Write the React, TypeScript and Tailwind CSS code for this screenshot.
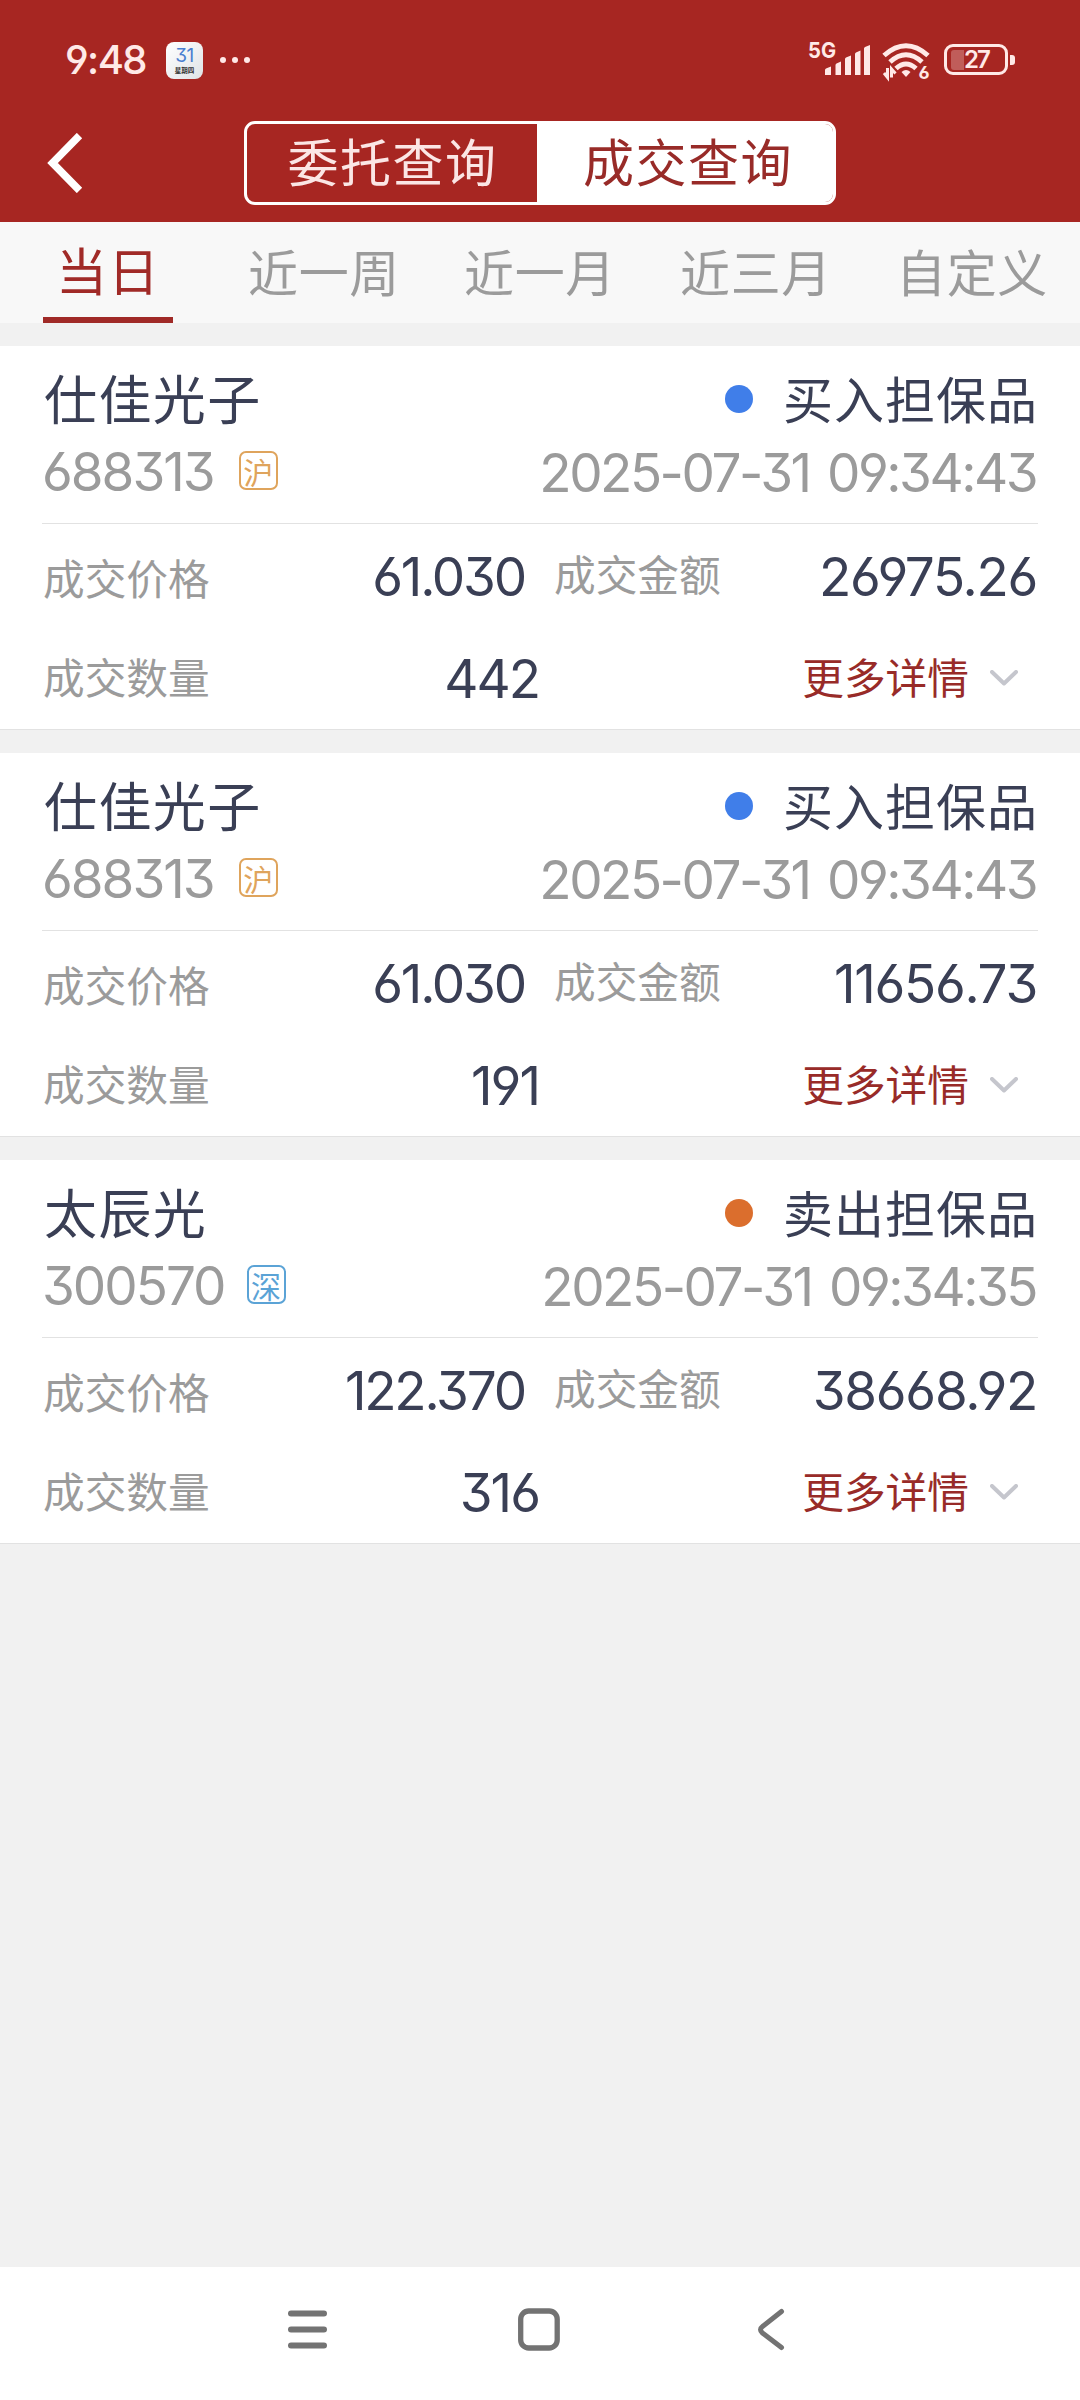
const CJK = "font-['Noto_Sans_CJK_SC',sans-serif]";
// Inter with open 6/9 and flat-top 3
const NUM = "font-['Inter','Noto_Sans_CJK_SC',sans-serif] [font-feature-settings:'cv03','cv04','cv09']";

const TABS = ['当日', '近一周', '近一月', '近三月', '自定义'];

type Deal = {
  name: string;
  code: string;
  market: '沪' | '深';
  side: 'buy' | 'sell';
  time: string;
  price: string;
  amount: string;
  qty: string;
};

const DEALS: Deal[] = [
  {
    name: '仕佳光子',
    code: '688313',
    market: '沪',
    side: 'buy',
    time: '2025-07-31 09:34:43',
    price: '61.030',
    amount: '26975.26',
    qty: '442',
  },
  {
    name: '仕佳光子',
    code: '688313',
    market: '沪',
    side: 'buy',
    time: '2025-07-31 09:34:43',
    price: '61.030',
    amount: '11656.73',
    qty: '191',
  },
  {
    name: '太辰光',
    code: '300570',
    market: '深',
    side: 'sell',
    time: '2025-07-31 09:34:35',
    price: '122.370',
    amount: '38668.92',
    qty: '316',
  },
];

const MARKET_STYLE = {
  沪: 'ml-[25px] border-[#dfa45c] text-[#dfa45c]',
  深: 'ml-[22px] border-[#5ba3d6] text-[#5ba3d6]',
};

function Signal() {
  return (
    <svg viewBox="0 -10 62 50" fill="#ffe9e7" className="-mt-[10px] h-[50px] w-[62px]">
      <text x="0" y="17.500" fontSize="22" fontWeight="700" textLength="28" lengthAdjust="spacingAndGlyphs">
        5G
      </text>
      <path d="M17 35v-5q0-1 1-1.500l5-2V35zM27.500 35V25q0-1 1-1.500l4.500-2V35zM37 35V19q0-1 1-1.500l5-2V35zM47 35V14q0-1 1-1.500l4.500-2V35zM56 35V8.500q0-1 1-1.500l5-2V35z" />
    </svg>
  );
}

function Wifi() {
  return (
    <svg viewBox="0 0 50 50" fill="none" stroke="#ffe9e7" className="h-[50px] w-[50px]">
      <path d="M2 15.500Q24-4 46 15.500" strokeWidth="5" />
      <path d="M8 22Q24 7.500 40 22" strokeWidth="5" />
      <path d="M14 28.500Q24 19.500 34 28.500" strokeWidth="5" />
      <path d="M19.500 32Q24 28 28.500 32L24 37z" fill="#ffe9e7" stroke="none" />
      <path d="M5.500 28v9.500L2 33M9.500 37.500V29l4 4.500" strokeWidth="3" />
      <text x="36.500" y="38.500" fontSize="18" fontWeight="700" fill="#ffe9e7" stroke="none">
        6
      </text>
    </svg>
  );
}

function StatusBar() {
  return (
    <div className={`flex h-[121px] items-start pr-[65px] pl-[65px] ${NUM}`}>
      <span className="mt-[35px] w-[101px] text-[40px] leading-[50px] font-medium tracking-[-1.6px] text-[#ffe9e7]">
        9:48
      </span>
      <div className="mt-[42px] flex h-[37px] w-[37px] flex-col items-center rounded-[8px] bg-gradient-to-br from-white to-[#dfe3e6]">
        <span className="mt-[4px] text-[19px] leading-[20px] tracking-[-0.5px] text-[#4a7fd0]">31</span>
        <span className={`text-[6.5px] leading-[8px] font-bold text-[#333] ${CJK}`}>星期四</span>
      </div>
      <div className="mt-[57px] ml-[17px] flex gap-[6px]">
        <i className="h-[6px] w-[6px] rounded-full bg-[#ffe9e7]" />
        <i className="h-[6px] w-[6px] rounded-full bg-[#ffe9e7]" />
        <i className="h-[6px] w-[6px] rounded-full bg-[#ffe9e7]" />
      </div>
      <div className="mt-[40px] ml-auto flex items-start">
        <Signal />
        <div className="ml-[12px]">
          <Wifi />
        </div>
        <div className="mt-[4px] ml-[12px] flex items-center gap-[2px]">
          <div className="flex h-[31px] w-[64px] items-center rounded-[9px] border-[3px] border-[#ffe9e7] pl-[4px]">
            <i className="h-[20px] w-[13px] rounded-l-[3px] bg-[#c05d5a]" />
            <span className="text-[24px] leading-[25px] font-semibold tracking-[-2px] text-[#ffe9e7]">27</span>
          </div>
          <i className="h-[10px] w-[5px] rounded-r-[3px] bg-[#ffe9e7]" />
        </div>
      </div>
    </div>
  );
}

function DealCard({ deal }: { deal: Deal }) {
  const buy = deal.side === 'buy';
  return (
    <section className="h-[384px] border-b border-[#e2e2e2] bg-white px-[42px]">
      <div className="flex h-[178px] flex-col border-b border-[#e2e2e2] pt-[26px]">
        <div className="flex h-[54px] items-center justify-between text-[#3a3f55]">
          <h2 className="mb-[5px] pl-[2px] text-[53px] leading-[54px] tracking-[1.4px]">{deal.name}</h2>
          <div className="flex items-center">
            <i className={`mr-[30px] h-7 w-7 rounded-full ${buy ? 'bg-[#407ee9]' : 'bg-[#db6e2d]'}`} />
            <span className="mb-[5px] text-[50px] leading-[54px] tracking-[1px]">
              {buy ? '买入担保品' : '卖出担保品'}
            </span>
          </div>
        </div>
        <div className="mt-[19px] flex h-[52px] items-center justify-between text-[#9b9b9b]">
          <div className="flex items-center">
            <span className={`mt-px text-[53px] leading-[52px] tracking-[-2px] ${NUM}`}>{deal.code}</span>
            <span
              className={`mb-px grid h-[39px] w-[39px] place-items-center rounded-[7px] border-2 text-[30px] leading-[34px] ${MARKET_STYLE[deal.market]}`}
            >
              {deal.market}
            </span>
          </div>
          <span
            className={`mt-[3px] pr-[2px] text-[53px] leading-[52px] tracking-[-2.5px] [word-spacing:5px] ${NUM}`}
          >
            {deal.time}
          </span>
        </div>
      </div>

      <div className="flex h-[104px] items-center">
        <span className="mt-px w-[260px] pl-px text-[41.7px] leading-[48px] text-[#9b9b9b]">成交价格</span>
        <span
          className={`mt-px w-[224px] pr-[1px] text-right text-[53px] leading-[52px] tracking-[-2.2px] text-[#3a3f55] ${NUM}`}
        >
          {deal.price}
        </span>
        <span className="mb-[7px] ml-[28px] text-[41.7px] leading-[48px] text-[#9b9b9b]">成交金额</span>
        <span
          className={`mt-px ml-auto pr-[1px] text-[53px] leading-[52px] tracking-[-1.3px] text-[#3a3f55] ${NUM}`}
        >
          {deal.amount}
        </span>
      </div>
      <div className="flex h-[101px] items-center">
        <span className="mb-[5px] w-[260px] pl-px text-[41.7px] leading-[48px] text-[#9b9b9b]">成交数量</span>
        <span
          className={`mt-px w-[238px] pr-[1px] text-right text-[53px] leading-[52px] tracking-[-2px] text-[#3a3f55] ${NUM}`}
        >
          {deal.qty}
        </span>
        <button className="ml-auto flex items-center text-[41.7px] leading-[48px] text-[#982b28]">
          <span className="mb-[5px]">更多详情</span>
          <svg
            viewBox="0 0 28 16"
            fill="none"
            stroke="#c5c6cd"
            strokeWidth="4"
            strokeLinecap="round"
            strokeLinejoin="round"
            className="mr-[20px] mb-[2px] ml-[21px] h-4 w-7"
          >
            <path d="M2 2l12 11.500L26 2" />
          </svg>
        </button>
      </div>
    </section>
  );
}

function NavBar() {
  return (
    <nav className="mt-auto flex h-[133px] items-start bg-white pt-[40px] pl-[285px]">
      <svg viewBox="0 0 46 46" stroke="#737373" strokeWidth="6" strokeLinecap="round" className="h-[46px] w-[46px]">
        <path d="M6 6.500h33M6 22.500h33M6 38.500h33" />
      </svg>
      <svg viewBox="0 0 46 46" fill="none" stroke="#737373" strokeWidth="5.300" className="ml-[185px] h-[46px] w-[46px]">
        <rect x="4.700" y="4" width="36.500" height="37" rx="8" />
      </svg>
      <svg
        viewBox="0 0 46 46"
        fill="none"
        stroke="#737373"
        strokeWidth="5"
        strokeLinecap="round"
        className="ml-[187px] h-[46px] w-[46px]"
      >
        <path d="M32.500 4.500L13.500 19.500q-4 3 0 6.500L32.500 40.500" />
      </svg>
    </nav>
  );
}

export default function App() {
  return (
    <div className={`flex h-[2400px] w-[1080px] flex-col overflow-hidden bg-[#f1f1f1] ${CJK}`}>
      <header className="h-[222px] bg-[#a72622]">
        <StatusBar />
        <div className="flex h-[84px] items-center">
          <svg viewBox="0 0 36 60" fill="none" stroke="white" strokeWidth="7.500" className="ml-[47px] h-[60px] w-9">
            <path d="M32.500 2.500L5.500 30l27 27.500" />
          </svg>
          <div className="ml-[161px] flex h-[84px] w-[592px] overflow-hidden rounded-[11px] border-[3px] border-white text-[51px] leading-[73px] tracking-[1.5px]">
            <button className="w-[290px] pb-[5px] pl-px text-[#fbe6e5]">委托查询</button>
            <button className="flex-1 bg-white pb-[5px] pl-[6px] text-[#982b28]">成交查询</button>
          </div>
        </div>
      </header>

      <div className="flex h-[101px] bg-[#f8f8f8]">
        {TABS.map((tab, i) => (
          <button
            key={tab}
            className={
              i === 0
                ? 'mx-[43px] w-[130px] border-b-[6px] border-[#a02a27] text-[51px] leading-[95px] tracking-[1px] text-[#a02a27]'
                : 'h-[95px] w-[216px] text-[50px] leading-[96px] tracking-[0.7px] text-[#9b9b9b]'
            }
          >
            {tab}
          </button>
        ))}
      </div>

      <main className="mt-[23px] flex flex-col gap-[23px]">
        {DEALS.map((deal, i) => (
          <DealCard key={i} deal={deal} />
        ))}
      </main>

      <NavBar />
    </div>
  );
}
